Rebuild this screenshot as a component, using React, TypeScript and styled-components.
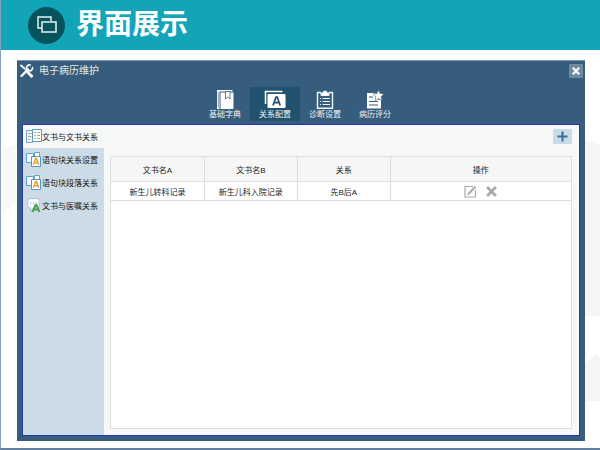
import React from "react";
import styled, { createGlobalStyle } from "styled-components";

const GlobalStyle = createGlobalStyle`
  *, *::before, *::after { box-sizing: border-box; }
  body { margin: 0; background: #fff; font-family: "Liberation Sans", "Noto Sans CJK SC", sans-serif; font-size: 8px; color: #222; }
  button { font: inherit; border: 0; padding: 0; margin: 0; background: none; cursor: pointer; }
  svg { display: block; flex: none; }
`;

const Page = styled.div`
  position: relative;
  min-height: 100vh;
  display: flex;
  flex-direction: column;
  border-left: 1px solid #86a0c6;
  border-bottom: 2px solid #62809f;
`;

const Backdrop = styled.svg<{ $side: "left" | "right" }>`
  position: absolute;
  top: 0;
  ${(p) => p.$side}: 0;
  height: 100%;
  width: 20px;
`;

const Banner = styled.header`
  position: relative;
  height: 50px;
  display: flex;
  align-items: center;
  gap: 11px;
  padding-left: 27px;
  background: #12a4b7;
  color: #fff;
`;

const Badge = styled.span`
  width: 37px;
  height: 37px;
  border-radius: 50%;
  background: #07535b;
  display: grid;
  place-items: center;
`;

const BannerTitle = styled.h1`
  margin: 0;
  font-size: 28px;
  line-height: 50px;
  font-weight: 700;
`;

const Window = styled.section`
  position: relative;
  flex: 1;
  margin: 10px 15px 7px 16px;
  padding: 0 5px 5px;
  display: flex;
  flex-direction: column;
  background: #365d7e;
  border-top: 1px solid #7d95ab;
`;

const TitleBar = styled.div`
  height: 20px;
  display: flex;
  align-items: center;
  justify-content: space-between;
  margin: 0 -3px;
`;

const WindowTitle = styled.h2`
  margin: 0;
  display: flex;
  align-items: center;
  gap: 5px;
  font-size: 10px;
  line-height: 16px;
  font-weight: 400;
  color: #e2ece8;
`;

const CloseButton = styled.button`
  width: 14px;
  height: 14px;
  display: grid;
  place-items: center;
  border-radius: 1px;
  background: #718b9e;
`;

const Tabs = styled.nav`
  display: flex;
  justify-content: center;
  padding: 6px 2px 3px 0;
`;

const Tab = styled.button<{ $active?: boolean }>`
  width: 50px;
  height: 34px;
  display: flex;
  flex-direction: column;
  align-items: center;
  padding-top: 3px;
  line-height: 12px;
  color: #edf4f7;
  background: ${(p) => (p.$active ? "#215370" : "transparent")};
`;

const Body = styled.div`
  flex: 1;
  display: flex;
  border: 1px solid #2737a5;
  background: #f6f8f8;
`;

const Sidebar = styled.aside`
  width: 81px;
  display: flex;
  flex-direction: column;
  background: #cbdce6;
`;

const SideItem = styled.button<{ $active?: boolean }>`
  height: 23px;
  display: flex;
  align-items: center;
  padding-left: 3px;
  white-space: nowrap;
  color: #111;
  background: ${(p) => (p.$active ? "#f6f8f8" : "transparent")};
`;

const Main = styled.main`
  flex: 1;
  min-width: 0;
  display: flex;
  flex-direction: column;
  padding: 4px 7px 6px 6px;
`;

const AddButton = styled.button`
  align-self: flex-end;
  width: 19px;
  height: 15px;
  margin-bottom: 12px;
  display: grid;
  place-items: center;
  border-radius: 1px;
  background: #c8dce8;
`;

const TableFrame = styled.div`
  flex: 1;
  border: 1px solid #d9e0de;
  background: #fff;
`;

const Table = styled.table`
  width: 100%;
  table-layout: fixed;
  border-collapse: separate;
  border-spacing: 0;
  text-align: center;
`;

const Column = styled.col<{ $share: number }>`
  width: ${(p) => p.$share}%;
`;

const HeadCell = styled.th`
  height: 25px;
  padding: 0;
  font-weight: 400;
  background: #f6f6f6;
  border-bottom: 1px solid #dde1e1;
  & + & { border-left: 1px solid #d9dddd; }
`;

const Cell = styled.td`
  height: 19px;
  padding: 0;
  border-bottom: 1px solid #d9dddd;
  & + & { border-left: 1px solid #d9dddd; }
`;

const Actions = styled.div`
  display: flex;
  justify-content: center;
  align-items: center;
  gap: 9px;
`;

const WindowsIcon = () => (
  <svg width="20" height="18" viewBox="0 0 20 18" fill="none" stroke="#e8f4f4" strokeWidth="1.5">
    <path d="M5 12H1V1h13v4" />
    <rect x="5" y="6" width="14" height="10" />
  </svg>
);

const ToolsIcon = () => (
  <svg width="15" height="14" viewBox="0 0 14 14" fill="none" stroke="#f4f8fa" strokeLinecap="round">
    <path d="M1.500 1.500l3 2.500" strokeWidth="2" />
    <path d="M4 3.600l4.500 4.800" strokeWidth="1.300" />
    <path d="M8.500 8.500l3.500 3.600" strokeWidth="3" />
    <path d="M2 12l6.500-6.600" strokeWidth="2.400" />
    <path d="M10.700 1a3 3 0 1 0 2.300 2.500" strokeWidth="1.700" />
  </svg>
);

const CrossIcon = ({ size, color }: { size: number; color: string }) => (
  <svg width={size} height={size} viewBox="0 0 10 10" stroke={color} strokeWidth="2.600">
    <path d="M1 1l8 8M9 1L1 9" />
  </svg>
);

const BookIcon = () => (
  <svg width="18" height="19" viewBox="0 0 18 19">
    <path d="M1 0h15.500v1.500H3.500V19H1z" fill="#fff" />
    <path d="M2.300 2v15.500" stroke="#365d7e" strokeWidth=".6" />
    <path d="M4.500 2.500h13V19h-13z" fill="#fff" />
    <path d="M9.500 1.500h4.500V9L11.750 7 9.500 9z" fill="#fff" stroke="#365d7e" strokeWidth=".8" />
  </svg>
);

const CardsIcon = () => (
  <svg width="22" height="19" viewBox="0 0 22 19">
    <path d="M1.500 14V1.500h17" fill="none" stroke="#fff" strokeWidth="1.500" />
    <rect x="3.500" y="4" width="18" height="14" rx="1" fill="#fff" />
    <path d="M9 15.500L12 7h1.200l3 8.500M10 12.700h5" fill="none" stroke="#244f70" strokeWidth="1.700" />
  </svg>
);

const ClipboardIcon = () => (
  <svg width="18" height="19" viewBox="0 0 18 19" fill="none" stroke="#eef5f8">
    <path d="M5 2.500H1.500v15.800h15V2.500H13" strokeWidth="1.400" />
    <path d="M5 5.500V3h2a2 2 0 0 1 4 0h2v2.500z" fill="#fff" />
    <path d="M4 8.500h1M6.500 8.500h7.500M4 11.500h1M6.500 11.500h7.500M4 14.500h1M6.500 14.500h7.500" />
  </svg>
);

const ScoreIcon = () => (
  <svg width="18" height="19" viewBox="0 0 18 19">
    <path d="M1 3h8l1 6 5 1v8.500H1z" fill="#fff" />
    <path d="M12.500 0l1.600 3.500 3.900.5-2.900 2.600.8 3.900-3.400-2-3.500 2 .8-3.900L7 4l3.900-.5z" fill="#fff" stroke="#365d7e" strokeWidth=".5" />
    <path d="M3 7h4M3 11.500h9M3 15h9" stroke="#365d7e" />
  </svg>
);

const DocumentsIcon = () => (
  <svg width="16" height="15" viewBox="0 0 16 15">
    <path d="M.5 1.500h6v12h-6z" fill="#edf7fb" stroke="#6aa7cd" />
    <path d="M6.500.5h9v12h-9z" fill="#fff" stroke="#5a9bc5" />
    <path d="M2 4.500h2M2 7.500h2M2 10.500h2M8 3.500h2M8 6.500h2M8 9.500h2" stroke="#dda55c" />
    <path d="M4 4.500h1.500M4 7.500h1.500M11 3.500h3M11 6.500h3M11 9.500h3" stroke="#80b5bd" />
  </svg>
);

const BlocksIcon = () => (
  <svg width="16" height="15" viewBox="0 0 16 15">
    <path d="M.5 1.500h7v9h-7z" fill="#f6fbfd" stroke="#5fa2cf" />
    <path d="M8.500.5h5v4h-5z" fill="#fff" stroke="#5fa2cf" />
    <path d="M5.500 4.500h9v10h-9z" fill="#fff" stroke="#4e9aca" />
    <path d="M7.500 12.800L9.700 6.500h.8l2.200 6.300M8.300 10.700h3.700" fill="none" stroke="#ee9e32" strokeWidth="1.500" />
  </svg>
);

const SpeechIcon = () => (
  <svg width="16" height="15" viewBox="0 0 16 15">
    <path d="M4.500.5h6q3 0 3 3v3.500q0 3-3 3H7.500l-3 3v-3Q1.500 10 1.500 7V3.500q0-3 3-3z" fill="#f8fbff" stroke="#aabdd2" />
    <path d="M4 5h1.200M6.800 5H8M9.600 5h1.200" stroke="#8c9abb" strokeWidth="1.200" />
    <path d="M6.500 14L9.500 7h1l3 7M8 11.500h4.500" fill="none" stroke="#48a647" strokeWidth="2" />
  </svg>
);

const PlusIcon = () => (
  <svg width="11" height="11" viewBox="0 0 11 11" stroke="#3c6b93" strokeWidth="2">
    <path d="M5.500 .5v10M.5 5.500h10" />
  </svg>
);

const EditIcon = () => (
  <svg width="13" height="13" viewBox="0 0 13 13" fill="none" stroke="#aaa">
    <path d="M9 1.500H1v10.500h10.500V5" strokeWidth="1.200" />
    <path d="M5 8.500l6.500-7" strokeWidth="2" />
    <path d="M3 10.200l1-3 2 2z" fill="#aaa" stroke="none" />
  </svg>
);

const tabs = [
  { label: "基础字典", Icon: BookIcon },
  { label: "关系配置", Icon: CardsIcon, active: true },
  { label: "诊断设置", Icon: ClipboardIcon },
  { label: "病历评分", Icon: ScoreIcon },
];

const sideItems = [
  { label: "文书与文书关系", Icon: DocumentsIcon, active: true },
  { label: "语句块关系设置", Icon: BlocksIcon },
  { label: "语句块段落关系", Icon: BlocksIcon },
  { label: "文书与医嘱关系", Icon: SpeechIcon },
];

const columns = [
  { label: "文书名A", share: 20.2 },
  { label: "文书名B", share: 20.2 },
  { label: "关系", share: 20.2 },
  { label: "操作", share: 39.4 },
];

export default function App() {
  return (
    <Page>
      <GlobalStyle />
      <Backdrop $side="left" viewBox="0 0 20 448" preserveAspectRatio="none" aria-hidden="true">
        <path d="M1 148l8-2 6-2v60L1 212z" fill="#f8f8f8" />
      </Backdrop>
      <Backdrop $side="right" viewBox="0 0 20 448" preserveAspectRatio="none" aria-hidden="true">
        <path d="M0 141h12l8 3v172H0z" fill="#f6f6f6" />
        <path d="M0 370q8-11 16-15l4 3v43H0z" fill="#f6f6f6" />
      </Backdrop>
      <Banner>
        <Badge><WindowsIcon /></Badge>
        <BannerTitle>界面展示</BannerTitle>
      </Banner>
      <Window>
        <TitleBar>
          <WindowTitle><ToolsIcon />电子病历维护</WindowTitle>
          <CloseButton aria-label="关闭"><CrossIcon size={8} color="#fff" /></CloseButton>
        </TitleBar>
        <Tabs>
          {tabs.map(({ label, Icon, active }) => (
            <Tab key={label} $active={active}><Icon />{label}</Tab>
          ))}
        </Tabs>
        <Body>
          <Sidebar>
            {sideItems.map(({ label, Icon, active }) => (
              <SideItem key={label} $active={active}><Icon />{label}</SideItem>
            ))}
          </Sidebar>
          <Main>
            <AddButton aria-label="添加"><PlusIcon /></AddButton>
            <TableFrame>
              <Table>
                <colgroup>
                  {columns.map((c) => <Column key={c.label} $share={c.share} />)}
                </colgroup>
                <thead>
                  <tr>{columns.map((c) => <HeadCell key={c.label} scope="col">{c.label}</HeadCell>)}</tr>
                </thead>
                <tbody>
                  <tr>
                    <Cell>新生儿转科记录</Cell>
                    <Cell>新生儿科入院记录</Cell>
                    <Cell>先B后A</Cell>
                    <Cell>
                      <Actions>
                        <button aria-label="编辑"><EditIcon /></button>
                        <button aria-label="删除"><CrossIcon size={11} color="#aaa" /></button>
                      </Actions>
                    </Cell>
                  </tr>
                </tbody>
              </Table>
            </TableFrame>
          </Main>
        </Body>
      </Window>
    </Page>
  );
}
